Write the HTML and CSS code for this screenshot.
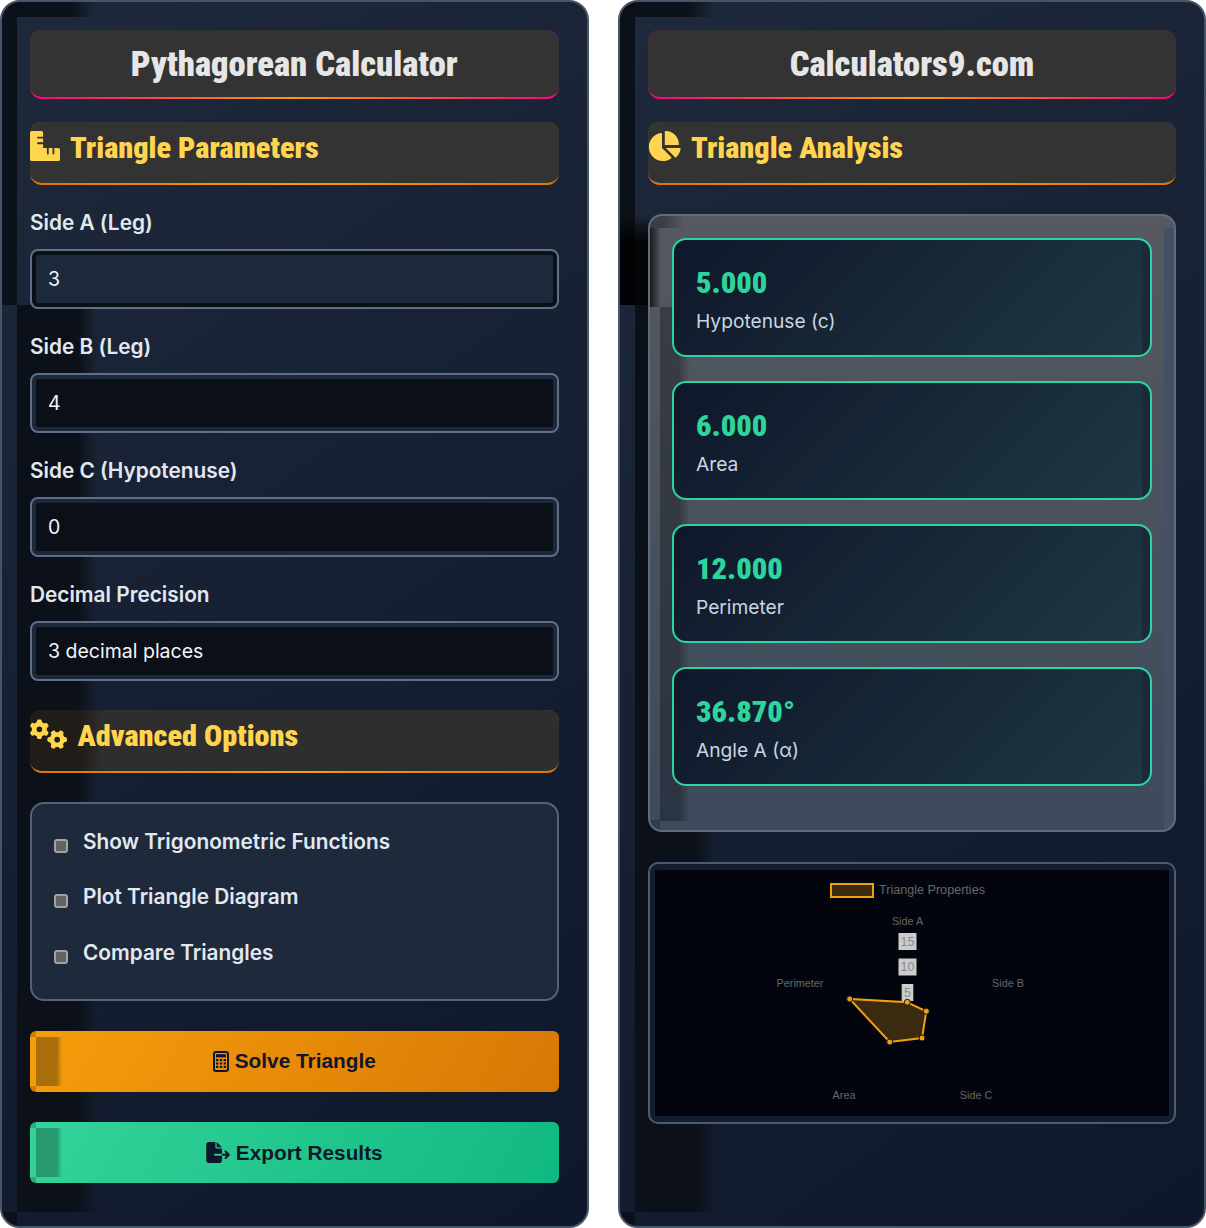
FILE: index.html
```html
<!DOCTYPE html>
<html lang="en">
<head>
<meta charset="utf-8">
<title>Pythagorean Calculator</title>
<link rel="stylesheet" href="styles.css">
</head>
<body>
<main class="layout">
  <section class="panel">
    <h1 class="title">Pythagorean Calculator</h1>
    <h2 class="section">
      <svg class="icon icon-ruler" viewBox="0 0 512 512"><path d="M32 0H192a32 32 0 0 1 32 32V96H136a16 16 0 0 0 0 32H224V192H136a16 16 0 0 0 0 32H224V288H288V384a16 16 0 0 0 32 0V288H384V384a16 16 0 0 0 32 0V288H480a32 32 0 0 1 32 32V480a32 32 0 0 1-32 32H32a32 32 0 0 1-32-32V32A32 32 0 0 1 32 0Z"/></svg>
      Triangle Parameters
    </h2>
    <div class="field">
      <label class="label" for="a">Side A (Leg)</label>
      <input class="input input-active" id="a" type="text" value="3">
    </div>
    <div class="field">
      <label class="label" for="b">Side B (Leg)</label>
      <input class="input" id="b" type="text" value="4">
    </div>
    <div class="field">
      <label class="label" for="c">Side C (Hypotenuse)</label>
      <input class="input" id="c" type="text" value="0">
    </div>
    <div class="field field-last">
      <label class="label" for="p">Decimal Precision</label>
      <select class="input" id="p"><option>3 decimal places</option></select>
    </div>
    <h2 class="section section-wide section-shaded">
      <svg class="icon icon-gears" viewBox="0 0 640 512"><path d="M308.5 135.3c7.1-6.3 9.9-16.2 6.2-25c-2.3-5.3-4.8-10.5-7.6-15.5L304 89.4c-3-5-6.3-9.9-9.8-14.6c-5.7-7.6-15.7-10.1-24.7-7.1l-28.2 9.3c-10.7-8.8-23-16-36.2-20.9L199 27.1c-1.9-9.3-9.1-16.7-18.5-17.8C173.9 8.4 167.2 8 160.4 8h-.7c-6.8 0-13.5 .4-20.1 1.2c-9.4 1.1-16.6 8.6-18.5 17.8L115 55.1c-13.3 5-25.5 12.1-36.2 20.9L50.5 66.8c-9-3-19-.5-24.7 7.1c-3.5 4.7-6.8 9.6-9.9 14.6l-3 5.3c-2.8 5-5.3 10.2-7.6 15.6c-3.7 8.7-.9 18.6 6.2 25l22.2 19.8C32.6 161.9 32 168.9 32 176s.6 14.1 1.7 20.9L11.5 216.7c-7.1 6.3-9.9 16.2-6.2 25c2.3 5.3 4.8 10.5 7.6 15.6l3 5.2c3 5.1 6.3 9.9 9.9 14.6c5.7 7.6 15.7 10.1 24.7 7.1l28.2-9.3c10.7 8.8 23 16 36.2 20.9l6.1 28.1c1.9 9.3 9.1 16.7 18.5 17.8c6.7 .8 13.5 1.2 20.4 1.2s13.7-.4 20.4-1.2c9.4-1.1 16.6-8.6 18.5-17.8l6.1-28.1c13.3-5 25.5-12.1 36.2-20.9l28.2 9.3c9 3 19 .5 24.7-7.1c3.5-4.7 6.8-9.5 9.8-14.6l3.1-5.4c2.8-5 5.3-10.2 7.6-15.5c3.7-8.7 .9-18.6-6.2-25l-22.2-19.8c1.1-6.8 1.7-13.8 1.7-20.9s-.6-14.1-1.7-20.9l22.2-19.8zM112 176a48 48 0 1 1 96 0 48 48 0 1 1 -96 0zM504.7 500.5c6.3 7.1 16.2 9.9 25 6.2c5.3-2.3 10.5-4.8 15.5-7.6l5.4-3.1c5-3 9.9-6.3 14.6-9.8c7.6-5.7 10.1-15.7 7.1-24.7l-9.3-28.2c8.8-10.7 16-23 20.9-36.2l28.1-6.1c9.3-1.9 16.7-9.1 17.8-18.5c.8-6.7 1.2-13.5 1.2-20.4s-.4-13.7-1.2-20.4c-1.1-9.4-8.6-16.6-17.8-18.5L584.9 307c-5-13.3-12.1-25.5-20.9-36.2l9.3-28.2c3-9 .5-19-7.1-24.7c-4.7-3.5-9.5-6.8-14.6-9.9l-5.3-3c-5-2.8-10.2-5.3-15.6-7.6c-8.7-3.7-18.6-.9-25 6.2l-19.8 22.2c-6.8-1.1-13.8-1.7-20.9-1.7s-14.1 .6-20.9 1.7l-19.8-22.2c-6.3-7.1-16.2-9.9-25-6.2c-5.3 2.3-10.5 4.8-15.6 7.6l-5.2 3c-5.1 3-9.9 6.3-14.6 9.9c-7.6 5.7-10.1 15.7-7.1 24.7l9.3 28.2c-8.8 10.7-16 23-20.9 36.2L315.1 313c-9.3 1.9-16.7 9.1-17.8 18.5c-.8 6.7-1.2 13.5-1.2 20.4s.4 13.7 1.2 20.4c1.1 9.4 8.6 16.6 17.8 18.5l28.1 6.1c5 13.3 12.1 25.5 20.9 36.2l-9.3 28.2c-3 9-.5 19 7.1 24.7c4.7 3.5 9.5 6.8 14.6 9.8l5.4 3.1c5 2.8 10.2 5.3 15.5 7.6c8.7 3.7 18.6 .9 25-6.2l19.8-22.2c6.8 1.1 13.8 1.7 20.9 1.7s14.1-.6 20.9-1.7l19.8 22.2zM464 304a48 48 0 1 1 0 96 48 48 0 1 1 0-96z"/></svg>
      Advanced Options
    </h2>
    <div class="options">
      <label class="option"><input class="check" type="checkbox">Show Trigonometric Functions</label>
      <label class="option"><input class="check" type="checkbox">Plot Triangle Diagram</label>
      <label class="option"><input class="check" type="checkbox">Compare Triangles</label>
    </div>
    <button class="btn btn-solve" type="button">
      <svg class="btn-icon btn-icon-calc" viewBox="0 0 16 21"><rect x="1" y="1" width="14" height="19" rx="2" fill="none" stroke="currentColor" stroke-width="2"/><rect x="3" y="3.2" width="10" height="3.2" fill="currentColor"/><path fill="currentColor" d="M3 8h2.4v2.2H3zM6.8 8h2.4v2.2H6.8zM10.6 8H13v2.2h-2.4zM3 11.4h2.4v2.2H3zM6.8 11.4h2.4v2.2H6.8zM10.6 11.4H13v2.2h-2.4zM3 14.8h2.4V17H3zM6.8 14.8h2.4V17H6.8zM10.6 14.8H13V17h-2.4z"/></svg>
      Solve Triangle
    </button>
    <button class="btn btn-export" type="button">
      <svg class="btn-icon btn-icon-export" viewBox="0 0 576 512"><path fill="currentColor" d="M0 64C0 28.7 28.7 0 64 0H224V128c0 17.7 14.3 32 32 32H384V288H216c-13.3 0-24 10.7-24 24s10.7 24 24 24H384V448c0 35.3-28.7 64-64 64H64c-35.3 0-64-28.7-64-64V64zM384 336V288H494.1l-39-39c-9.4-9.4-9.4-24.6 0-33.9s24.6-9.4 33.9 0l80 80c9.4 9.4 9.4 24.6 0 33.9l-80 80c-9.4 9.4-24.6 9.4-33.9 0s-9.4-24.6 0-33.9l39-39H384zm0-208H256V0L384 128z"/></svg>
      Export Results
    </button>
  </section>

  <section class="panel panel-right">
    <h1 class="title">Calculators9.com</h1>
    <h2 class="section section-wide">
      <svg class="icon icon-pie" viewBox="0 0 576 512"><path d="M304 240V16.6c0-9 7-16.6 16-16.6C443.7 0 544 100.3 544 224c0 9-7.6 16-16.6 16H304zM32 272C32 150.7 122.1 50.3 239 34.3c9.2-1.3 17 6.1 17 15.4V288L412.5 444.5c6.7 6.7 6.2 17.7-1.5 23.1C371.8 495.6 323.8 512 272 512C139.5 512 32 404.6 32 272zm526.4 16c9.3 0 16.6 7.8 15.4 17c-7.7 55.9-34.6 105.6-73.9 142.3c-6 5.6-15.4 5.2-21.2-.7L320 288H558.4z"/></svg>
      Triangle Analysis
    </h2>
    <div class="results">
      <div class="card"><div class="value">5.000</div><div class="name">Hypotenuse (c)</div></div>
      <div class="card"><div class="value">6.000</div><div class="name">Area</div></div>
      <div class="card"><div class="value">12.000</div><div class="name">Perimeter</div></div>
      <div class="card"><div class="value">36.870°</div><div class="name">Angle A (α)</div></div>
    </div>
    <div class="chart">
      <svg class="chart-svg" viewBox="655 870 514 246">
        <rect class="legend-box" x="831" y="884" width="42" height="13"/>
        <text class="chart-text" x="879" y="894">Triangle Properties</text>
        <text class="chart-text axis" x="907.5" y="925" text-anchor="middle">Side A</text>
        <text class="chart-text axis" x="1008" y="987" text-anchor="middle">Side B</text>
        <text class="chart-text axis" x="976" y="1099" text-anchor="middle">Side C</text>
        <text class="chart-text axis" x="844" y="1099" text-anchor="middle">Area</text>
        <text class="chart-text axis" x="800" y="987" text-anchor="middle">Perimeter</text>
        <rect class="tick-box" x="898.5" y="933" width="18" height="17"/>
        <text class="tick" x="907.5" y="945.5" text-anchor="middle">15</text>
        <rect class="tick-box" x="898.5" y="958.5" width="18" height="17"/>
        <text class="tick" x="907.5" y="971" text-anchor="middle">10</text>
        <rect class="tick-box" x="901.7" y="984" width="11.6" height="17"/>
        <text class="tick" x="907.5" y="996.5" text-anchor="middle">5</text>
        <polygon class="shape" points="907.3,1002.3 926.3,1011.3 922,1038 889.7,1042 849.7,999"/>
        <g class="dots">
          <circle cx="907.3" cy="1002.3" r="3"/>
          <circle cx="926.3" cy="1011.3" r="3"/>
          <circle cx="922" cy="1038" r="3"/>
          <circle cx="889.7" cy="1042" r="3"/>
          <circle cx="849.7" cy="999" r="3"/>
        </g>
      </svg>
    </div>
  </section>
</main>
</body>
</html>
```

FILE: styles.css
```css
* { box-sizing: border-box; }

html, body { margin: 0; padding: 0; background: #fff; }

.layout {
  display: grid;
  grid-template-columns: 588.5px 588px;
  gap: 29.5px;
  width: 1206px;
  min-height: 1228px;
  font-family: Inter, "Liberation Sans", sans-serif;
}

.panel {
  --shade: #0c1119;
  border: 2px solid #465569;
  border-radius: 20px;
  padding: 28px;
  background:
    linear-gradient(90deg, var(--shade) 0, var(--shade) 72%, transparent 100%) 0 0 / 95px 15px no-repeat,
    linear-gradient(var(--shade), var(--shade)) 0 0 / 15px 303px no-repeat,
    linear-gradient(90deg, var(--shade) 0, var(--shade) 76%, transparent 100%) 15px 303px / 80px 907px no-repeat,
    linear-gradient(var(--shade), var(--shade)) 0 1210px / 15px 14px no-repeat,
    linear-gradient(145deg, #1e293b, #0f172a);
}

.panel-right {
  background:
    linear-gradient(180deg, rgba(0, 0, 0, 0), rgba(0, 0, 0, .88) 28px) 0 212px / 30px 91px no-repeat,
    linear-gradient(90deg, var(--shade) 0, var(--shade) 72%, transparent 100%) 0 0 / 95px 15px no-repeat,
    linear-gradient(var(--shade), var(--shade)) 0 0 / 15px 303px no-repeat,
    linear-gradient(90deg, var(--shade) 0, var(--shade) 76%, transparent 100%) 15px 303px / 80px 907px no-repeat,
    linear-gradient(var(--shade), var(--shade)) 0 1210px / 15px 14px no-repeat,
    linear-gradient(145deg, #1e293b, #0f172a);
}

.title {
  height: 69px;
  margin: 0 0 23px;
  border-bottom: 2px solid transparent;
  border-radius: 12px;
  background:
    linear-gradient(#333, #333) padding-box,
    linear-gradient(90deg, #ff0080 0, #f59e0b 50%, #ff0080 100%) border-box;
  color: #e6e6e6;
  font-family: Roboto, "Liberation Sans", sans-serif;
  font-stretch: 75%;
  font-size: 34.6px;
  font-weight: 900;
  line-height: 69px;
  text-align: center;
}

.section {
  display: flex;
  align-items: flex-start;
  gap: 10px;
  height: 63px;
  margin: 0 0 25.5px;
  padding-top: 9px;
  border-bottom: 2px solid transparent;
  border-radius: 12px;
  background:
    linear-gradient(#333, #333) padding-box,
    linear-gradient(90deg, #d97706 0, #f59e0b 50%, #d97706 100%) border-box;
  color: #ffd54f;
  font-family: Roboto, "Liberation Sans", sans-serif;
  font-stretch: 75%;
  font-size: 30.25px;
  font-weight: 900;
  line-height: 34px;
}

.section-wide { margin-bottom: 29px; }

.section-shaded {
  background:
    linear-gradient(90deg, #201c17 0, #201c17 68%, #2e2e2e 100%) 0 0 / 72px 100% no-repeat padding-box,
    linear-gradient(#2e2e2e, #2e2e2e) padding-box,
    linear-gradient(90deg, #d97706 0, #f59e0b 50%, #d97706 100%) border-box;
}

.icon { flex: none; height: 30px; fill: currentColor; }
.icon-ruler { width: 30px; }
.icon-gears { width: 37.5px; }
.icon-pie { width: 33.75px; margin-left: -.7px; }

.field { margin-bottom: 26px; }
.field-last { margin-bottom: 29.5px; }

.label {
  display: block;
  margin-bottom: 14px;
  color: #e2e8f0;
  font-size: 20.8px;
  font-weight: 600;
  line-height: 24px;
}

.input {
  display: block;
  width: 100%;
  height: 60px;
  padding: 0 16px;
  border: 2px solid #5f6f88;
  border-radius: 8px;
  outline: none;
  appearance: none;
  background: #0a0f18;
  box-shadow: inset 0 0 0 4px #1c2739;
  color: #f1f5f9;
  font-family: Inter, "Liberation Sans", sans-serif;
  font-size: 19.5px;
}

.input-active {
  background: #1e293b;
  box-shadow: inset 0 0 0 4px #0b1017;
}

.options {
  height: 199px;
  margin-bottom: 30px;
  padding: 24px 22px;
  border: 2px solid #52627a;
  border-radius: 14px;
  background: #1e293b;
}

.option {
  display: flex;
  gap: 15px;
  margin-bottom: 27.25px;
  color: #e2e8f0;
  font-size: 20.8px;
  font-weight: 600;
  line-height: 28px;
}

.check {
  flex: none;
  width: 14px;
  height: 14px;
  margin: 11px 0 0;
  appearance: none;
  border: 2px solid #a3a3a3;
  border-radius: 3px;
  background: #636363;
}

.btn {
  display: flex;
  align-items: center;
  justify-content: center;
  gap: 6px;
  width: 100%;
  height: 61px;
  margin-bottom: 30px;
  padding: 0;
  border: 0;
  border-radius: 6px;
  color: #0f172a;
  font-family: "Liberation Sans", Arial, sans-serif;
  font-size: 20.8px;
  font-weight: 700;
}

.btn-solve {
  padding-bottom: 1px;
  background:
    linear-gradient(rgba(0, 0, 0, .18), rgba(0, 0, 0, .18)) 0 0 / 6px 6px no-repeat,
    linear-gradient(rgba(0, 0, 0, .18), rgba(0, 0, 0, .18)) 0 100% / 6px 6px no-repeat,
    linear-gradient(90deg, #a96f0c 0, #a96f0c 80%, rgba(169, 111, 12, 0) 100%) 6px 6px / 26px 49px no-repeat,
    linear-gradient(120deg, #f59e0b, #d97706);
}

.btn-export {
  margin-bottom: 0;
  background:
    linear-gradient(rgba(0, 0, 0, .18), rgba(0, 0, 0, .18)) 0 0 / 6px 6px no-repeat,
    linear-gradient(rgba(0, 0, 0, .18), rgba(0, 0, 0, .18)) 0 100% / 6px 6px no-repeat,
    linear-gradient(90deg, #279a70 0, #279a70 80%, rgba(39, 154, 112, 0) 100%) 6px 6px / 26px 49px no-repeat,
    linear-gradient(120deg, #34d399, #10b981);
}

.btn-icon { flex: none; height: 21px; }
.btn-icon-calc { width: 16px; }
.btn-icon-export { width: 24px; }

.results {
  display: flex;
  flex-direction: column;
  gap: 24px;
  height: 618px;
  margin-bottom: 30px;
  padding: 22px;
  border: 2px solid #5f6c80;
  border-radius: 14px;
  background:
    linear-gradient(90deg, rgba(0, 0, 0, .7), rgba(0, 0, 0, .08)) 0 12px / 10px 79px no-repeat,
    linear-gradient(90deg, rgba(0, 0, 0, .3) 0, rgba(0, 0, 0, .3) 62%, transparent 100%) 10px 91px / 30px 514px no-repeat,
    linear-gradient(90deg, rgba(0, 0, 0, .3) 0, rgba(0, 0, 0, .3) 40%, transparent 100%) 0 0 / 34px 12px no-repeat,
    linear-gradient(rgba(0, 0, 0, .2), rgba(0, 0, 0, .2)) 0 100% / 10px 10px no-repeat,
    linear-gradient(#445066, #445066) 100% 12px / 10px 100% no-repeat,
    linear-gradient(180deg, #56595f, #3c4a5c);
}

.card {
  height: 119px;
  padding: 25px 22px 0;
  border: 2px solid #2dd4a0;
  border-radius: 14px;
  background:
    linear-gradient(#1b2a3a, #1b2a3a) 100% 0 / 8px 100% no-repeat,
    linear-gradient(135deg, #0f172a, #1f3843);
}

.value {
  color: #2dd49c;
  font-family: Roboto, "Liberation Sans", sans-serif;
  font-stretch: 75%;
  font-size: 30.4px;
  font-weight: 900;
  line-height: 36px;
}

.name {
  margin-top: 8px;
  color: #cbd5e1;
  font-size: 19.2px;
  line-height: 24px;
}

.chart {
  height: 262px;
  padding: 6px 5px 6px;
  border: 2px solid #4c5b72;
  border-radius: 10px;
  background: #141d2e;
}

.chart-svg { display: block; width: 514px; height: 246px; background: #02050d; }

.chart-text { fill: #666; font-family: "Liberation Sans", Arial, sans-serif; font-size: 12.6px; }
.chart-text.axis { font-size: 10.8px; }
.legend-box { fill: #3a2a10; stroke: #f59e0b; stroke-width: 2; }
.tick-box { fill: #cccccc; }
.tick { fill: #8a8a8a; font-family: "Liberation Sans", Arial, sans-serif; font-size: 12.5px; }
.shape { fill: #3a2a10; stroke: #f59e0b; stroke-width: 2; }
.dots circle { fill: #f59e0b; stroke: #0f172a; stroke-width: 1; }
```
